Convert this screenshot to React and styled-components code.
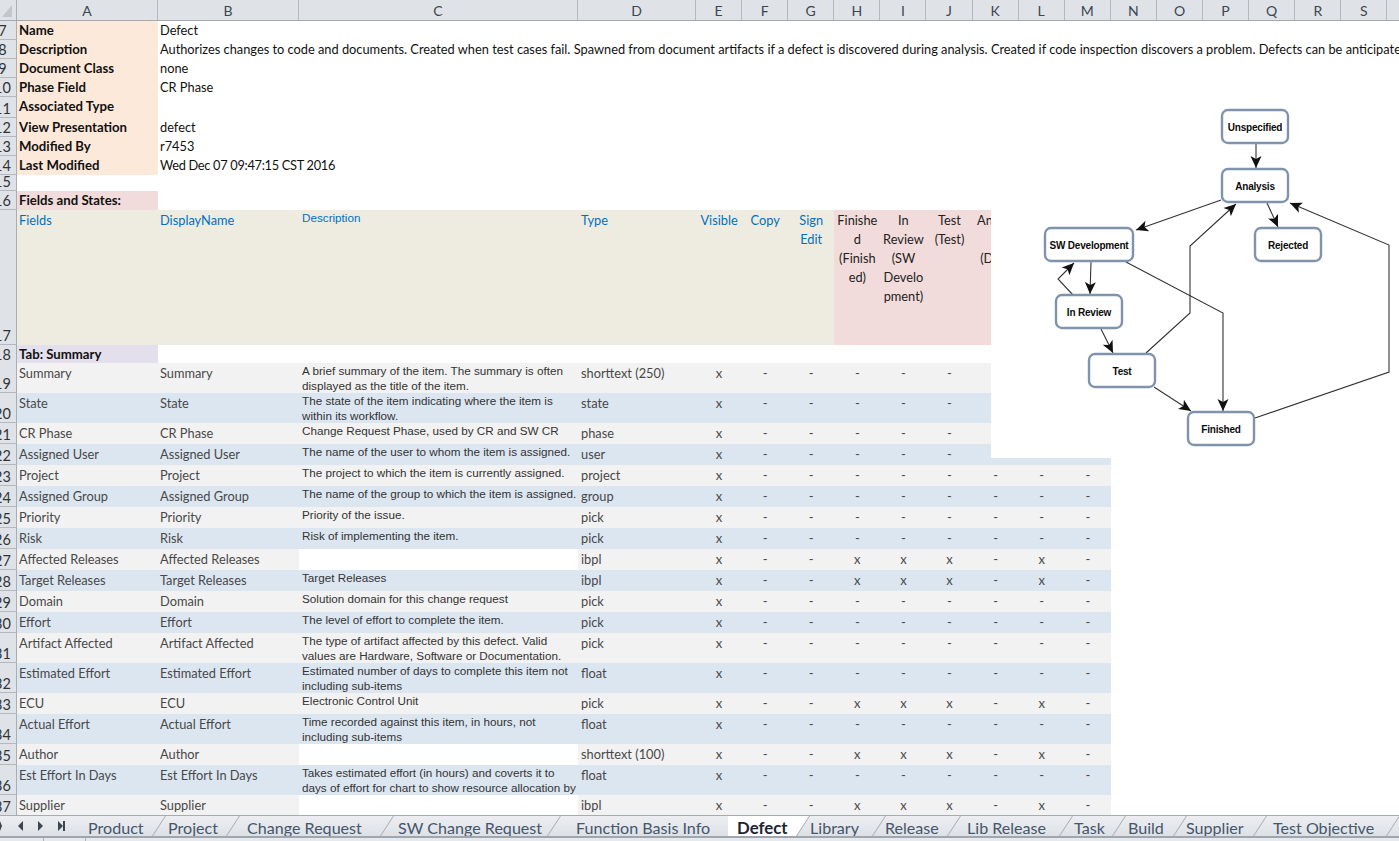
import React from "react";
import styled, { createGlobalStyle } from "styled-components";

const GlobalStyle = createGlobalStyle`
  html, body {
    margin: 0;
    padding: 0;
    background: #ffffff;
  }
`;

const COLUMNS = "17px 141px 141px 279px 118px repeat(9, 46.1px) 1fr";
const LETTERS = "ABCDEFGHIJKLMNOPQRS".split("");
const LETTER_WIDTHS = [141, 141, 279, 118];

const Page = styled.div`
  width: 1399px;
  height: 841px;
  display: flex;
  flex-direction: column;
  overflow: hidden;
  font-family: Lato, "Open Sans", sans-serif;
  font-size: 12.8px;
  color: #222222;
`;

const LetterBar = styled.div`
  display: flex;
  height: 20px;
  flex: none;
  background: #dfe3e8;
  border-bottom: 1px solid #a4a9af;
`;

const Corner = styled.div`
  position: relative;
  width: 16px;
  flex: none;
  border-right: 1px solid #a9aeb4;

  &::after {
    content: "";
    position: absolute;
    left: 2px;
    top: 5px;
    width: 10px;
    height: 12px;
    background: #c3c7cc;
    clip-path: polygon(100% 0, 100% 100%, 0 100%);
  }
`;

const Letter = styled.div`
  width: ${(props) => props.$w}px;
  flex: none;
  box-sizing: border-box;
  display: flex;
  align-items: center;
  justify-content: center;
  border-right: 1px solid #b4b9bf;
  font-size: 14px;
  color: #3c4650;
`;

const Sheet = styled.div`
  position: relative;
  flex: 1;
  min-height: 0;
  overflow: hidden;
`;

const Row = styled.div`
  display: grid;
  grid-template-columns: ${COLUMNS};
  height: ${(props) => props.$h}px;
`;

const Gutter = styled.div`
  box-sizing: border-box;
  display: flex;
  align-items: flex-end;
  justify-content: center;
  padding-right: 11px;
  overflow: hidden;
  background: #dfe3e8;
  border-right: 1px solid #a9aeb4;
  border-bottom: 1px solid #b4b9bf;
  font-size: 14.5px;
  line-height: 16px;
  color: #333333;
`;

const Label = styled.div`
  padding-left: 2px;
  font-size: 13.2px;
  font-weight: 700;
  line-height: 19px;
  white-space: nowrap;
  color: #111111;
  background: ${(props) => props.$bg};
`;

const Value = styled.div`
  grid-column: 3 / -1;
  padding-left: 2px;
  line-height: 19px;
  white-space: nowrap;
  letter-spacing: ${(props) => (props.$tight ? "-0.3px" : "normal")};
  color: #111111;
`;

const HeadCell = styled.div`
  padding-top: 1px;
  padding-left: ${(props) => (props.$center ? 0 : props.$indent || 2)}px;
  line-height: 19px;
  white-space: pre-line;
  overflow: hidden;
  text-align: ${(props) => (props.$center ? "center" : "left")};
  color: ${(props) => (props.$state ? "#222222" : "#0070c0")};
  background: ${(props) => (props.$state ? "#f2dcdb" : "#eeece1")};
`;

const HeadDescription = styled.div`
  padding: 1px 0 0 3px;
  font-family: "Liberation Sans", Arial, sans-serif;
  font-size: 11.7px;
  line-height: 14px;
  color: #0070c0;
  background: #eeece1;
`;

const Cell = styled.div`
  padding-left: ${(props) => props.$indent || 2}px;
  line-height: 20px;
  white-space: nowrap;
  overflow: hidden;
  color: #484848;
  background: ${(props) => props.$bg};
`;

const DescCell = styled.div`
  padding-left: 3px;
  font-family: "Liberation Sans", Arial, sans-serif;
  font-size: 11.7px;
  line-height: 15px;
  overflow: hidden;
  color: #333333;
  background: ${(props) => props.$bg};
`;

const Mark = styled.div`
  text-align: center;
  line-height: 20px;
  font-size: 13px;
  color: #4a4a4a;
  background: ${(props) => props.$bg};
`;

const DiagramOverlay = styled.svg`
  position: absolute;
  left: 991px;
  top: 74px;
  width: 408px;
  height: 363px;
  background: #ffffff;
`;

const Edge = styled.polyline`
  fill: none;
  stroke: #333333;
  stroke-width: 1.1;
`;

const NodeBox = styled.rect`
  fill: #ffffff;
  stroke: #7f93ad;
  stroke-width: 2.4;
`;

const NodeText = styled.text`
  font-family: "Liberation Sans", Arial, sans-serif;
  font-size: 10px;
  font-weight: 700;
  letter-spacing: -0.2px;
  text-anchor: middle;
  fill: #0c0c0c;
`;

const TabBar = styled.div`
  display: flex;
  height: 21px;
  flex: none;
  overflow: hidden;
  box-sizing: border-box;
  border-top: 1px solid #a7acb2;
  background: linear-gradient(#eceef1, #dde1e6);
`;

const ScrollButtons = styled.svg`
  width: 75px;
  height: 20px;
  flex: none;
`;

const Tab = styled.div`
  position: relative;
  width: ${(props) => props.$w}px;
  flex: none;
  box-sizing: border-box;
  display: flex;
  align-items: center;
  padding: 2px 0 0 ${(props) => props.$pad}px;
  white-space: nowrap;
  font-size: ${(props) => (props.$active ? 16.8 : 16.1)}px;
  font-weight: ${(props) => (props.$active ? 700 : 400)};
  color: ${(props) => (props.$active ? "#1c2533" : "#46566c")};
  background: ${(props) => (props.$active ? "#ffffff" : "transparent")};

  &::after {
    content: "";
    position: absolute;
    left: 100%;
    bottom: 0;
    width: 13px;
    height: 20px;
    border-left: 1px solid #a7acb2;
    transform: skewX(-33deg);
    transform-origin: bottom left;
  }

  &::before {
    content: "";
    display: ${(props) => (props.$active ? "block" : "none")};
    position: absolute;
    left: 100%;
    top: 0;
    width: 13px;
    height: 20px;
    background: #ffffff;
    clip-path: polygon(0 0, 100% 0, 0 100%);
  }
`;

const BottomStrip = styled.div`
  display: flex;
  height: 3px;
  flex: none;
  border-top: 2px solid #a0a6ae;
  background: #e6e9ed;
`;

const StripGap = styled.div`
  width: ${(props) => props.$w}px;
  border-right: 1px solid #aeb3b9;
`;

const metaRows = [
  { n: 7, h: 19, label: "Name", value: "Defect" },
  {
    n: 8,
    h: 19,
    label: "Description",
    value:
      "Authorizes changes to code and documents. Created when test cases fail. Spawned from document artifacts if a defect is discovered during analysis. Created if code inspection discovers a problem. Defects can be anticipated",
  },
  { n: 9, h: 19, label: "Document Class", value: "none" },
  { n: 10, h: 19, label: "Phase Field", value: "CR Phase" },
  { n: 11, h: 21, label: "Associated Type", value: "" },
  { n: 12, h: 19, label: "View Presentation", value: "defect" },
  { n: 13, h: 19, label: "Modified By", value: "r7453" },
  { n: 14, h: 19, label: "Last Modified", value: "Wed Dec 07 09:47:15 CST 2016", tight: true },
];

const fieldRows = [
  { n: 19, h: 30, name: "Summary", desc: "A brief summary of the item. The summary is often displayed as the title of the item.", type: "shorttext (250)" },
  { n: 20, h: 30, name: "State", desc: "The state of the item indicating where the item is within its workflow.", type: "state" },
  { n: 21, h: 21, name: "CR Phase", desc: "Change Request Phase, used by CR and SW CR", type: "phase" },
  { n: 22, h: 21, name: "Assigned User", desc: "The name of the user to whom the item is assigned.", type: "user" },
  { n: 23, h: 21, name: "Project", desc: "The project to which the item is currently assigned.", type: "project" },
  { n: 24, h: 21, name: "Assigned Group", desc: "The name of the group to which the item is assigned.", type: "group" },
  { n: 25, h: 21, name: "Priority", desc: "Priority of the issue.", type: "pick" },
  { n: 26, h: 21, name: "Risk", desc: "Risk of implementing the item.", type: "pick" },
  { n: 27, h: 21, name: "Affected Releases", desc: "", type: "ibpl", all: true },
  { n: 28, h: 21, name: "Target Releases", desc: "Target Releases", type: "ibpl", all: true },
  { n: 29, h: 21, name: "Domain", desc: "Solution domain for this change request", type: "pick" },
  { n: 30, h: 21, name: "Effort", desc: "The level of effort to complete the item.", type: "pick" },
  { n: 31, h: 30, name: "Artifact Affected", desc: "The type of artifact affected by this defect. Valid values are Hardware, Software or Documentation.", type: "pick" },
  { n: 32, h: 30, name: "Estimated Effort", desc: "Estimated number of days to complete this item not including sub-items", type: "float" },
  { n: 33, h: 21, name: "ECU", desc: "Electronic Control Unit", type: "pick", all: true },
  { n: 34, h: 30, name: "Actual Effort", desc: "Time recorded against this item, in hours, not including sub-items", type: "float" },
  { n: 35, h: 21, name: "Author", desc: "", type: "shorttext (100)", all: true },
  { n: 36, h: 30, name: "Est Effort In Days", desc: "Takes estimated effort (in hours) and coverts it to days of effort for chart to show resource allocation by week", type: "float" },
  { n: 37, h: 21, name: "Supplier", desc: "", type: "ibpl", all: true },
];

const stateHeads = [
  "Finishe\nd\n(Finish\ned)",
  "In\nReview\n(SW\nDevelo\npment)",
  "Test\n(Test)",
  "Analys\nis\n(Defe\nr)",
];

// name, width, text indent, active
const tabs = [
  ["Product", 77, 13],
  ["Project", 74, 16],
  ["Change Request", 154, 21],
  ["SW Change Request", 167, 18],
  ["Function Basis Info", 181, 29],
  ["Defect", 68, 9, true],
  ["Library", 76, 14],
  ["Release", 75, 13],
  ["Lib Release", 112, 20],
  ["Task", 53, 15],
  ["Build", 61, 16],
  ["Supplier", 80, 13],
  ["Test Objective", 133, 20],
];

const nodes = [
  { label: "Unspecified", x: 1222, y: 110, w: 66 },
  { label: "Analysis", x: 1222, y: 169, w: 66 },
  { label: "SW Development", x: 1045, y: 228, w: 88 },
  { label: "Rejected", x: 1255, y: 228, w: 66 },
  { label: "In Review", x: 1056, y: 295, w: 66 },
  { label: "Test", x: 1089, y: 354, w: 66 },
  { label: "Finished", x: 1188, y: 412, w: 66 },
];

const edges = [
  "1256,144 1256,168",
  "1221,200 1136,230",
  "1267,203 1278,227",
  "1091,262 1090,294",
  "1073,295 1058,279 1074,263",
  "1101,329 1113,353",
  "1146,353 1190,313 1190,246 1236,204",
  "1154,387 1191,411",
  "1126,262 1223,313 1223,411",
  "1255,418 1389,372 1389,245 1290,203",
];

const rowBg = (n) => (n % 2 === 1 ? "#f2f2f2" : "#dce6f1");

const Diagram = () => (
  <DiagramOverlay viewBox="991 95 408 363">
    <defs>
      <marker
        id="head"
        markerUnits="userSpaceOnUse"
        markerWidth="13"
        markerHeight="13"
        refX="12"
        refY="6.5"
        orient="auto"
      >
        <path d="M0 1 L12 6.5 L0 12 L3 6.5 Z" fill="#111111" />
      </marker>
    </defs>
    {edges.map((points) => (
      <Edge key={points} points={points} markerEnd="url(#head)" />
    ))}
    {nodes.map((node) => (
      <g key={node.label}>
        <NodeBox x={node.x} y={node.y} width={node.w} height={33} rx="6" />
        <NodeText x={node.x + node.w / 2} y={node.y + 21}>
          {node.label}
        </NodeText>
      </g>
    ))}
  </DiagramOverlay>
);

const FieldRow = ({ row }) => {
  const bg = rowBg(row.n);
  const marks = ["x", "-", "-", "-", "-", "-", "-", "-", "-"];
  if (row.all) {
    marks[3] = "x";
    marks[4] = "x";
    marks[5] = "x";
    marks[7] = "x";
  }

  return (
    <Row $h={row.h}>
      <Gutter>{row.n}</Gutter>
      <Cell $bg={bg}>{row.name}</Cell>
      <Cell $bg={bg}>{row.name}</Cell>
      <DescCell $bg={row.desc ? bg : "#ffffff"}>{row.desc}</DescCell>
      <Cell $bg={bg} $indent={3}>
        {row.type}
      </Cell>
      {marks.map((mark, i) => (
        <Mark key={i} $bg={bg}>
          {mark}
        </Mark>
      ))}
    </Row>
  );
};

const App = () => {
  return (
    <Page>
      <GlobalStyle />
      <LetterBar>
        <Corner />
        {LETTERS.map((letter, i) => (
          <Letter key={letter} $w={LETTER_WIDTHS[i] || 46.1}>
            {letter}
          </Letter>
        ))}
      </LetterBar>

      <Sheet>
        {metaRows.map((row) => (
          <Row key={row.n} $h={row.h}>
            <Gutter>{row.n}</Gutter>
            <Label $bg="#fde9d9">{row.label}</Label>
            <Value $tight={row.tight}>{row.value}</Value>
          </Row>
        ))}
        <Row $h={16}>
          <Gutter>15</Gutter>
        </Row>
        <Row $h={19}>
          <Gutter>16</Gutter>
          <Label $bg="#f2dcdb">Fields and States:</Label>
        </Row>
        <Row $h={135}>
          <Gutter>17</Gutter>
          <HeadCell>Fields</HeadCell>
          <HeadCell>DisplayName</HeadCell>
          <HeadDescription>Description</HeadDescription>
          <HeadCell $indent={3}>Type</HeadCell>
          <HeadCell $center>Visible</HeadCell>
          <HeadCell $center>Copy</HeadCell>
          <HeadCell $center>{"Sign\nEdit"}</HeadCell>
          {stateHeads.map((head) => (
            <HeadCell key={head} $center $state>
              {head}
            </HeadCell>
          ))}
        </Row>
        <Row $h={18}>
          <Gutter>18</Gutter>
          <Label $bg="#e4dfec">Tab: Summary</Label>
        </Row>
        {fieldRows.map((row) => (
          <FieldRow key={row.n} row={row} />
        ))}
        <Diagram />
      </Sheet>

      <TabBar>
        <ScrollButtons viewBox="0 0 75 20">
          <path d="M0 5 L2 10 L0 15 Z" fill="#3d4650" />
          <path d="M23 5 L18 10 L23 15 Z" fill="#3d4650" />
          <path d="M38 5 L43 10 L38 15 Z" fill="#3d4650" />
          <path d="M58 5 L63 10 L58 15 Z M63 5 H65 V15 H63 Z" fill="#3d4650" />
        </ScrollButtons>
        {tabs.map(([name, w, pad, active]) => (
          <Tab key={name} $w={w} $pad={pad} $active={active}>
            {name}
          </Tab>
        ))}
      </TabBar>
      <BottomStrip>
        <StripGap $w={43} />
        <StripGap $w={41} />
      </BottomStrip>
    </Page>
  );
};

export default App;
